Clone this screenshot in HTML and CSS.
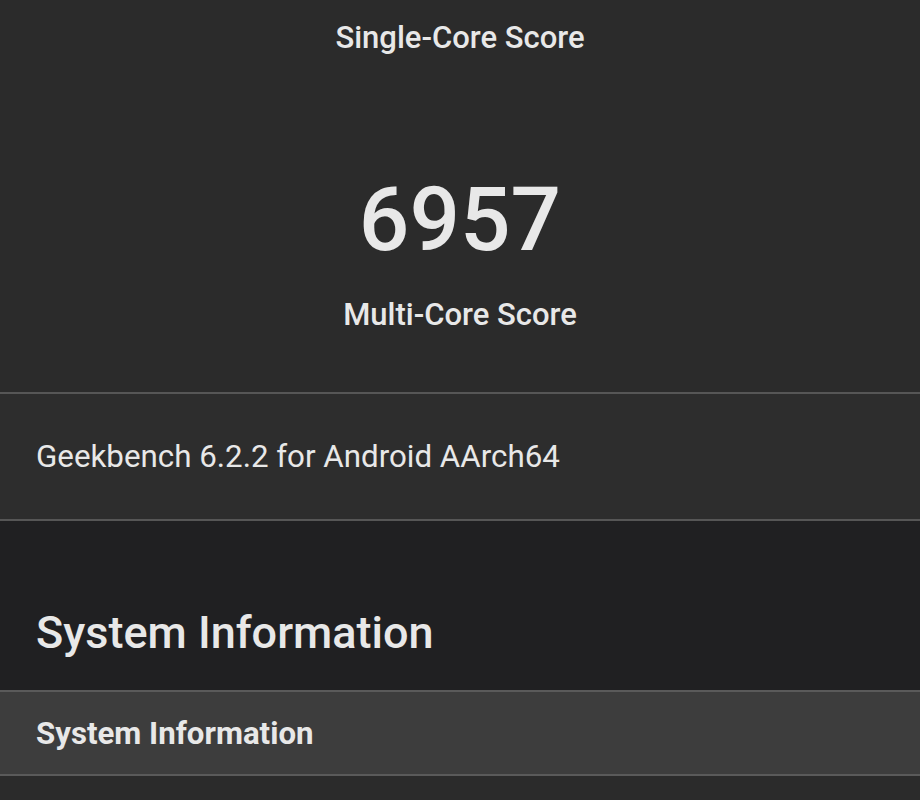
FILE: index.html
```html
<!DOCTYPE html>
<html lang="en">
<head>
<meta charset="utf-8">
<title>Geekbench Result</title>
<link rel="stylesheet" href="styles.css">
</head>
<body>
<div class="page">
  <section class="score-card">
    <div class="score-label top">Single-Core Score</div>
    <div class="score-value">6957</div>
    <div class="score-label">Multi-Core Score</div>
  </section>
  <div class="version-row">Geekbench 6.2.2 for Android AArch64</div>
  <section class="info-section">
    <h2 class="section-title">System Information</h2>
    <div class="table-head">System Information</div>
    <div class="table-body"></div>
  </section>
</div>
</body>
</html>
```

FILE: styles.css
```css
* { box-sizing: border-box; }
html, body {
  margin: 0;
  padding: 0;
  background: #2b2b2b;
  color: #e8e8e8;
  font-family: Roboto, "Liberation Sans", sans-serif;
}
.page {
  width: 920px;
  height: 800px;
  overflow: hidden;
  display: flex;
  flex-direction: column;
}
.score-card {
  background: #2b2b2b;
  height: 392px;
  display: flex;
  flex-direction: column;
  align-items: center;
  padding-top: 20px;
}
.score-label {
  font-size: 31px;
  font-weight: 500;
  line-height: 36px;
}
.score-value {
  font-size: 89px;
  font-weight: 500;
  line-height: 100px;
  margin-top: 114px;
}
.score-label + .score-value + .score-label { margin-top: 27px; }
.version-row {
  background: #2d2d2d;
  border-top: 2px solid #565656;
  border-bottom: 2px solid #565656;
  height: 129px;
  padding-left: 36px;
  display: flex;
  align-items: center;
  font-size: 31.3px;
  font-weight: 400;
}
.info-section {
  background: #202022;
  flex: 1;
  display: flex;
  flex-direction: column;
}
.section-title {
  margin: 0;
  height: 169px;
  padding: 86px 0 0 36px;
  font-size: 45px;
  font-weight: 500;
  line-height: 52px;
}
.table-head {
  background: #3d3d3d;
  border-top: 2px solid #5a5a5a;
  border-bottom: 2px solid #5a5a5a;
  height: 86px;
  padding-left: 36px;
  display: flex;
  align-items: center;
  font-size: 31.2px;
  font-weight: 700;
}
.table-body {
  flex: 1;
  background: #2b2b2b;
}
```
